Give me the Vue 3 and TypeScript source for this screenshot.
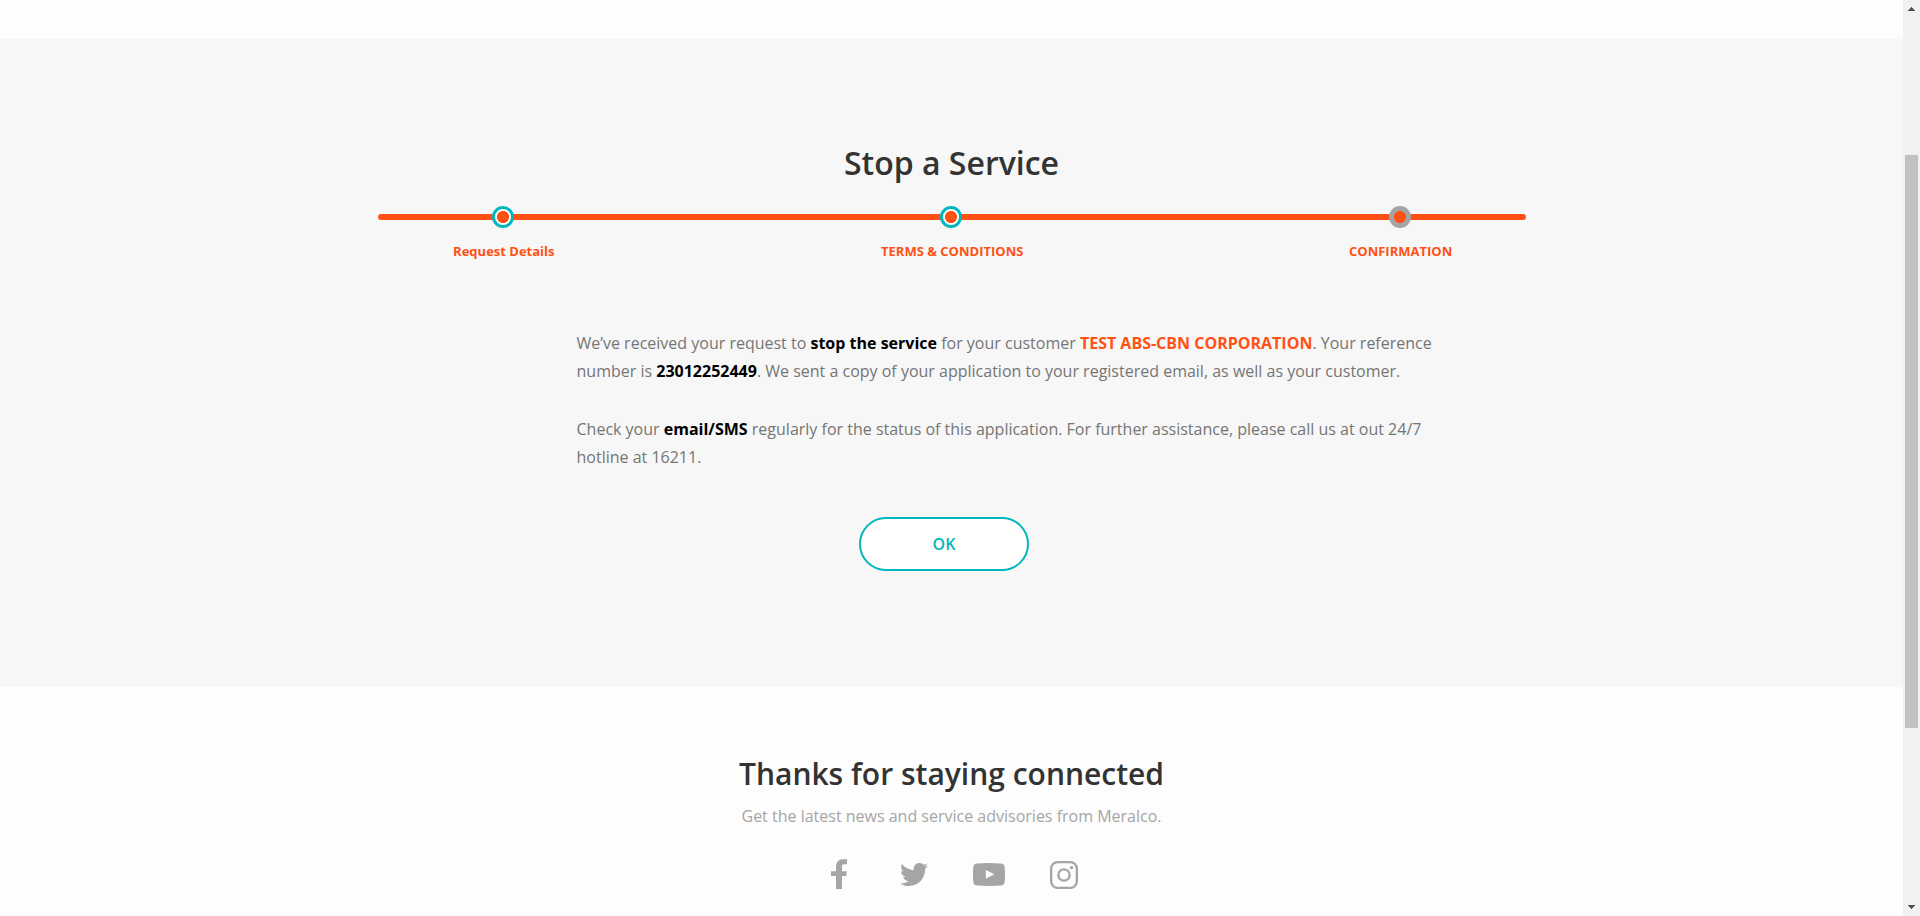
<script setup lang="ts">
interface Step {
  label: string
  current: boolean
}

const steps: Step[] = [
  { label: 'Request Details', current: false },
  { label: 'TERMS & CONDITIONS', current: false },
  { label: 'CONFIRMATION', current: true },
]
</script>

<template>
  <div class="viewport">
    <div class="page">
      <main class="service">
        <h1 class="title">Stop a Service</h1>
        <ol class="steps">
          <li v-for="step in steps" :key="step.label" class="step">
            <span class="dot" :class="{ current: step.current }"></span>
            <span class="label">{{ step.label }}</span>
          </li>
        </ol>
        <div class="message">
          <p>
            We’ve received your request to <b>stop the service</b> for your customer
            <b class="customer">TEST ABS-CBN CORPORATION</b>. Your reference number is
            <b>23012252449</b>. We sent a copy of your application to your registered email, as well as your customer.
          </p>
          <p>
            Check your <b>email/SMS</b> regularly for the status of this application. For further assistance, please
            call us at out 24/7 hotline at 16211.
          </p>
        </div>
        <button class="ok" type="button">OK</button>
      </main>
      <footer class="footer">
        <h2 class="thanks">Thanks for staying connected</h2>
        <p class="news">Get the latest news and service advisories from Meralco.</p>
        <nav class="social">
          <svg class="facebook" viewBox="0 0 16 30">
            <path d="M5 30V17H0V12.2H5V8C5 2.8 8 .2 12 .2H16V5.2H13.2C11.5 5.2 11 6 11 7.6V12.2H15.8L15.3 17H11V30z" />
          </svg>
          <svg class="twitter" viewBox="0 48 512 416" preserveAspectRatio="none">
            <path d="M459.37 151.716c.325 4.548.325 9.097.325 13.645 0 138.72-105.583 298.558-298.558 298.558-59.452 0-114.68-17.219-161.137-47.106 8.447.974 16.568 1.299 25.34 1.299 49.055 0 94.213-16.568 130.274-44.832-46.132-.975-84.792-31.188-98.112-72.772 6.498.974 12.995 1.624 19.818 1.624 9.421 0 18.843-1.3 27.614-3.573-48.081-9.747-84.143-51.98-84.143-102.985v-1.299c13.969 7.797 30.214 12.67 47.431 13.319-28.264-18.843-46.781-51.005-46.781-87.391 0-19.492 5.197-37.36 14.294-52.954 51.655 63.675 129.3 105.258 216.365 109.807-1.624-7.797-2.599-15.918-2.599-24.04 0-57.828 46.782-104.934 104.934-104.934 30.213 0 57.502 12.67 76.67 33.137 23.715-4.548 46.456-13.32 66.599-25.34-7.798 24.366-24.366 44.833-46.132 57.827 21.117-2.273 41.584-8.122 60.426-16.243-14.292 20.791-32.161 39.308-52.628 54.253z" />
          </svg>
          <svg class="youtube" viewBox="0 0 32 23">
            <path fill-rule="evenodd" d="M4.2.4Q16-.4 27.8.4Q31.4.6 31.7 4.2Q32.3 11.5 31.7 18.8Q31.4 22.4 27.8 22.6Q16 23.4 4.2 22.6Q.6 22.4.3 18.8Q-.3 11.5.3 4.2Q.6.6 4.2.4zM12.8 7V15.7L21.3 11.3z" />
          </svg>
          <svg class="instagram" viewBox="0 0 28 28">
            <rect x="1.15" y="1.15" width="25.7" height="25.7" rx="6.5" />
            <circle cx="14" cy="14" r="5.7" />
            <circle class="lens" cx="21.5" cy="6.6" r="1.7" />
          </svg>
        </nav>
      </footer>
    </div>
    <div class="scrollbar">
      <svg viewBox="0 0 7 4" shape-rendering="crispEdges"><path d="M3 0h1v1h1v1h1v1h1v1H0V3h1V2h1V1h1z" /></svg>
      <div class="track"><div class="thumb"></div></div>
      <svg viewBox="0 0 7 4" shape-rendering="crispEdges"><path d="M0 0h7v1H6v1H5v1H4v1H3V3H2V2H1V1H0z" /></svg>
    </div>
  </div>
</template>

<style>
body {
  margin: 0;
  overflow: hidden;
}
</style>

<style scoped>
.viewport {
  display: flex;
  height: 916px;
  overflow: hidden;
  font-family: 'Open Sans', 'Noto Sans', sans-serif;
}
.page {
  flex: 1;
  padding-top: 39px;
  background: #fdfdfd;
}
.service {
  box-sizing: border-box;
  height: 648px;
  padding-top: 102px;
  background: #f7f7f7;
}
.title,
.thanks {
  margin: 0;
  color: #333;
  font-weight: 600;
  text-align: center;
}
.title {
  font-size: 32px;
  line-height: 44px;
}
.steps {
  position: relative;
  display: flex;
  justify-content: space-between;
  box-sizing: border-box;
  width: 1148px;
  margin: 21px 0 0 378px;
  padding: 0 46.2px 0 45px;
  list-style: none;
}
.steps::before {
  content: '';
  position: absolute;
  top: 8px;
  left: 0;
  right: 0;
  height: 6px;
  border-radius: 3px;
  background: #ff5115;
}
.step {
  position: relative;
  display: flex;
  flex-direction: column;
  align-items: center;
  gap: 14px;
  width: 160px;
}
.dot {
  box-sizing: border-box;
  width: 22px;
  height: 22px;
  border: 3px solid #00b7bd;
  border-radius: 50%;
  background: radial-gradient(circle, #ff5115 5.7px, #fff 6.3px);
}
.dot.current {
  border-color: #a5a5a5;
  background: radial-gradient(circle, #ff5115 5.7px, #a5a5a5 6.3px);
}
.label {
  padding-left: 1.6px;
  color: #ff5115;
  font-size: 13px;
  font-weight: 700;
  line-height: 18px;
  white-space: nowrap;
}
.message {
  width: 870px;
  margin: 69px 0 0 576.5px;
  color: #757575;
  font-size: 16px;
  line-height: 28px;
}
.message p {
  margin: 0 0 30px;
}
.message b {
  color: #000;
  font-weight: 700;
}
.message .customer {
  color: #ff5115;
}
.ok {
  display: block;
  width: 170px;
  height: 54px;
  margin: 46px 0 0 859px;
  padding: 0;
  border: 2px solid #00b7bd;
  border-radius: 27px;
  background: #fff;
  color: #00b7bd;
  font: 600 16px/24px 'Open Sans', sans-serif;
}
.footer {
  padding-top: 66px;
}
.thanks {
  font-size: 30px;
  line-height: 42px;
}
.news {
  margin: 9px 0 0;
  color: #a5a5a5;
  font-size: 16px;
  line-height: 24px;
  text-align: center;
}
.social {
  display: flex;
  align-items: center;
  height: 35px;
  margin: 29px 0 0 831px;
  fill: #a5a5a5;
}
.facebook {
  width: 16px;
  height: 30px;
  margin-bottom: 2px;
}
.twitter {
  width: 28px;
  height: 23px;
  margin-left: 53px;
}
.youtube {
  width: 32px;
  height: 23px;
  margin-left: 45px;
}
.instagram {
  width: 28px;
  height: 28px;
  margin-left: 45px;
  fill: none;
  stroke: #a5a5a5;
  stroke-width: 2.3;
}
.instagram .lens {
  fill: #a5a5a5;
  stroke: none;
}
.scrollbar {
  display: flex;
  flex-direction: column;
  align-items: center;
  box-sizing: border-box;
  width: 17px;
  padding: 7px 0;
  background: #f1f1f1;
}
.scrollbar svg {
  width: 7px;
  height: 4px;
  fill: #505050;
}
.track {
  flex: 1;
  width: 13px;
  padding-top: 144px;
}
.thumb {
  height: 573px;
  background: #c1c1c1;
}
</style>
